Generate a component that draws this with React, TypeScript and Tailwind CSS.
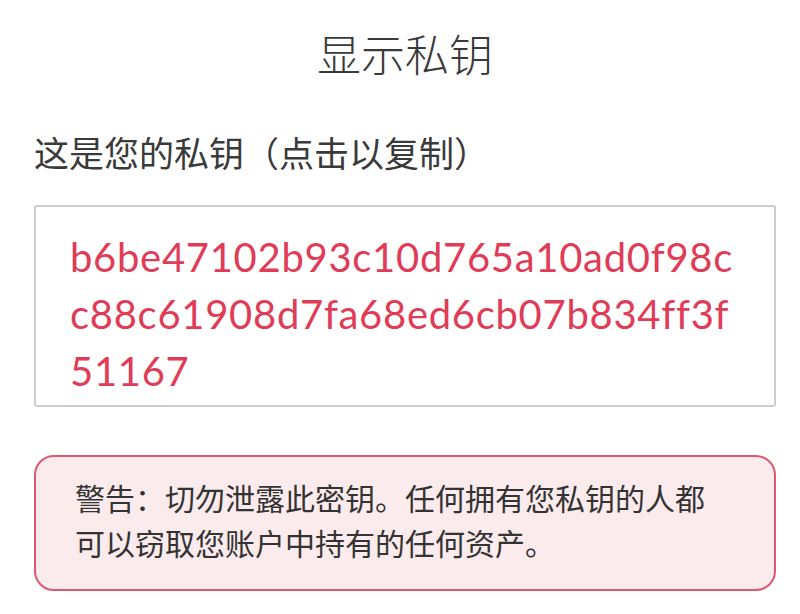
const privateKey =
  "b6be47102b93c10d765a10ad0f98cc88c61908d7fa68ed6cb07b834ff3f51167";

export default function App() {
  return (
    <div
      className="h-screen overflow-hidden bg-white pt-[29px] pr-[24px] pl-[34px] text-[#333333]"
      style={{ fontFamily: '"Noto Sans", "Noto Sans CJK SC", sans-serif' }}
    >
      <h1 className="text-center text-[44px] leading-[52px] font-light text-[#3a3a3a]">
        显示私钥
      </h1>

      <p className="mt-[52px] text-[35px] leading-[42px] text-[#3a3a3a]">
        这是您的私钥（点击以复制）
      </p>

      <button
        type="button"
        className="mt-[30px] block w-full cursor-pointer rounded-[3px] border-2 border-[#cdcdcd] bg-white pt-[22px] pr-[40px] pb-[5px] pl-[34px] text-left"
      >
        <span
          className="block break-all text-[40px] leading-[57px] tracking-[0.7px] text-[#e03c57]"
          style={{ fontFamily: 'Lato, "Noto Sans", sans-serif' }}
        >
          {privateKey}
        </span>
      </button>

      <div className="mt-[48px] rounded-[20px] border-2 border-[#de5870] bg-[#fcebed] pt-[19px] pr-[62px] pb-[23px] pl-[39px]">
        <p className="text-[30px] leading-[45px] text-[#333333]">
          警告：切勿泄露此密钥。任何拥有您私钥的人都可以窃取您账户中持有的任何资产。
        </p>
      </div>
    </div>
  );
}
